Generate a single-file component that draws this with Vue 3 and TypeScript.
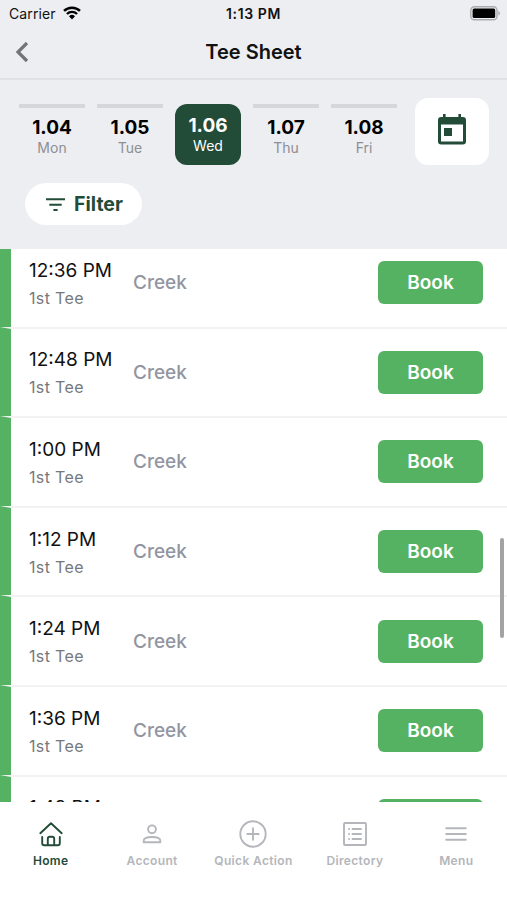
<script setup lang="ts">
interface Day { date: string; name: string; active?: boolean }

const days: Day[] = [
  { date: '1.04', name: 'Mon' },
  { date: '1.05', name: 'Tue' },
  { date: '1.06', name: 'Wed', active: true },
  { date: '1.07', name: 'Thu' },
  { date: '1.08', name: 'Fri' },
]
const times: string[] = ['12:36 PM', '12:48 PM', '1:00 PM', '1:12 PM', '1:24 PM', '1:36 PM', '1:48 PM']
const tabs: string[] = ['Home', 'Account', 'Quick Action', 'Directory', 'Menu']
</script>

<template>
  <div class="screen">
    <div class="status">
      <div class="carrier">
        <span>Carrier</span>
        <svg width="18" height="14" viewBox="0 0 18 14" fill="none" stroke="#000">
          <path d="M1 4.9a11.5 11.5 0 0 1 16 0" stroke-width="2.5" />
          <path d="M3.9 8a7.3 7.3 0 0 1 10.2 0" stroke-width="2.3" />
          <path d="M6 10.3a4.3 4.3 0 0 1 6 0L9 13.4z" fill="#000" stroke="none" />
        </svg>
      </div>
      <span class="clock">1:13 PM</span>
      <svg class="battery" width="31" height="15" viewBox="0 0 31 15">
        <rect x=".8" y=".8" width="26.2" height="13" rx="3.6" fill="none" stroke="#aaabad" stroke-width="1.4" />
        <rect x="2.6" y="2.6" width="22.6" height="9.4" rx="1.5" fill="#000" />
        <path d="M28.4 5v4.6c2-.7 2-3.9 0-4.6z" fill="#aaabad" />
      </svg>
    </div>

    <header class="nav">
      <svg class="back" width="14" height="22" viewBox="0 0 14 22" fill="none" stroke="#737477" stroke-width="3.2">
        <path d="M12 2 3 11l9 9" />
      </svg>
      <h1>Tee Sheet</h1>
    </header>

    <section class="controls">
      <div class="dates">
        <div class="days">
          <div v-for="d in days" :key="d.date" class="day" :class="{ active: d.active }">
            <b>{{ d.date }}</b>
            <span>{{ d.name }}</span>
          </div>
        </div>
        <button class="calendar" aria-label="Calendar">
          <svg width="28" height="32" viewBox="0 0 28 32" fill="#234c38">
            <path fill-rule="evenodd" d="M5 1h2.600v3h12.800V1H23v3h1.800A3.200 3.200 0 0 1 28 7.200v21a3.200 3.200 0 0 1-3.200 3.200H3.200A3.200 3.200 0 0 1 0 28.200V7.200A3.200 3.200 0 0 1 3.200 4H5zM3 11.500V28.500h22V11.500z" />
            <rect x="6" y="15" width="8" height="8" />
          </svg>
        </button>
      </div>
      <button class="filter">
        <svg width="19" height="13" viewBox="0 0 19 13" stroke="#234c38" stroke-width="2">
          <path d="M0 1.300h19M3.300 6.700h12.400M7.400 12h4.200" />
        </svg>
        <span>Filter</span>
      </button>
    </section>

    <main class="list">
      <div class="rows">
        <div v-for="t in times" :key="t" class="row">
          <div class="time">
            <span class="hour">{{ t }}</span>
            <span class="tee">1st Tee</span>
          </div>
          <span class="course">Creek</span>
          <button class="book">Book</button>
        </div>
      </div>
      <i class="scrollbar" />
    </main>

    <footer class="tabs">
      <div v-for="(t, i) in tabs" :key="t" class="tab" :class="{ on: i === 0 }">
        <svg width="28" height="28" viewBox="0 0 28 28" fill="none" stroke="currentColor" stroke-width="1.900" stroke-linecap="round" stroke-linejoin="round">
          <path v-if="i === 0" d="M3.300 13.200 14 3.200l10.700 10M5.200 17v6.200q0 2 2 2h13.600q2 0 2-2V17M10.800 25v-6.200q0-2 2-2h2.400q2 0 2 2V25" />
          <template v-else-if="i === 1">
            <circle cx="14" cy="9.300" r="3.900" />
            <path d="M5.700 22.300v-1.600c0-5 16.600-5 16.600 0v1.600z" />
          </template>
          <template v-else-if="i === 2">
            <circle cx="14" cy="14" r="12.700" />
            <path d="M14 8.300v11.400M8.300 14h11.400" />
          </template>
          <template v-else-if="i === 3">
            <rect x="3" y="3" width="22" height="22" rx="1" />
            <path d="M11.500 9H20M11.500 14H20M11.500 19H20M8 9h.1M8 14h.1M8 19h.1" />
          </template>
          <path v-else d="M4.200 8.300h19.600M4.200 14h19.600M4.200 19.700h19.600" />
        </svg>
        <span>{{ t }}</span>
      </div>
    </footer>
  </div>
</template>

<style>
body {
  margin: 0;
}
</style>

<style scoped>
.screen {
  width: 507px;
  height: 900px;
  display: flex;
  flex-direction: column;
  overflow: hidden;
  background: #edeef2;
  font-family: Inter, "Liberation Sans", sans-serif;
  color: #111;
}
button {
  border: 0;
  padding: 0;
  font-family: inherit;
}
.status {
  height: 27px;
  flex: none;
  display: grid;
  grid-template-columns: 1fr auto 1fr;
  align-items: center;
  padding: 0 6px 0 9px;
  font-size: 14px;
}
.carrier {
  display: flex;
  align-items: center;
  gap: 7px;
  letter-spacing: 0.1px;
}
.carrier svg {
  margin-bottom: 2px;
}
.clock {
  font-weight: 600;
  letter-spacing: 0.6px;
  margin-right: 3px;
}
.battery {
  justify-self: end;
}
.nav {
  height: 51px;
  flex: none;
  border-bottom: 2px solid #e0e1e4;
  display: grid;
  grid-template-columns: 1fr auto 1fr;
  align-items: center;
}
.back {
  margin: 0 0 2px 15px;
}
h1 {
  margin: 0 0 1px;
  font-size: 20px;
  font-weight: 600;
}
.controls {
  height: 169px;
  flex: none;
  box-sizing: border-box;
  padding: 18px 18px 0 19px;
}
.dates {
  display: flex;
  justify-content: space-between;
}
.days {
  display: flex;
  gap: 12px;
  padding-top: 6px;
}
.day {
  width: 66px;
  height: 61px;
  box-sizing: border-box;
  border-top: 4px solid #d6d7da;
  padding-top: 9px;
  display: flex;
  flex-direction: column;
  align-items: center;
}
.day b {
  font-size: 19px;
  line-height: 22px;
  font-weight: 700;
  color: #000;
}
.day span {
  font-size: 14px;
  line-height: 18px;
  color: #8e8f93;
}
.day.active {
  border: 0;
  padding-top: 11px;
  border-radius: 12px;
  background: #234c38;
}
.day.active b,
.day.active span {
  color: #fff;
}
.calendar {
  width: 74px;
  height: 67px;
  box-sizing: border-box;
  padding-bottom: 5px;
  border-radius: 13px;
  background: #fff;
  display: flex;
  align-items: center;
  justify-content: center;
}
.filter {
  margin: 18px 0 0 6px;
  width: 117px;
  height: 42px;
  box-sizing: border-box;
  padding-left: 2px;
  border-radius: 21px;
  background: #fff;
  display: flex;
  align-items: center;
  justify-content: center;
  gap: 9px;
  color: #234c38;
  font-size: 19.500px;
  font-weight: 700;
}
.list {
  height: 553px;
  flex: none;
  position: relative;
  overflow: hidden;
  background: #fff;
}
.rows {
  margin-top: -12px;
}
.row {
  height: 89.600px;
  box-sizing: border-box;
  border-left: 11px solid #56b263;
  border-top: 2px solid #f2f2f3;
  padding: 0 24px 0 18px;
  display: flex;
  align-items: center;
}
.time {
  width: 104px;
  padding-top: 3px;
  display: flex;
  flex-direction: column;
}
.hour {
  font-size: 19px;
  line-height: 28px;
  white-space: nowrap;
}
.tee {
  font-size: 16px;
  letter-spacing: 0.350px;
  line-height: 27px;
  color: #77787c;
}
.course {
  flex: 1;
  font-size: 19px;
  font-weight: 500;
  color: #92959f;
}
.book {
  width: 105px;
  height: 43px;
  border-radius: 6px;
  background: #56b263;
  color: #fff;
  font-size: 19px;
  font-weight: 600;
}
.scrollbar {
  position: absolute;
  top: 289px;
  right: 3px;
  width: 4px;
  height: 100px;
  border-radius: 2px;
  background: #a3a3a3;
}
.tabs {
  flex: 1;
  background: #fff;
  display: grid;
  grid-template-columns: repeat(5, 1fr);
  padding-top: 18px;
}
.tab {
  display: flex;
  flex-direction: column;
  align-items: center;
  gap: 5px;
  color: #b4b6bb;
  font-size: 12px;
  line-height: 15px;
  font-weight: 600;
  letter-spacing: 0.350px;
  white-space: nowrap;
}
.tab.on {
  color: #234c38;
}
</style>
